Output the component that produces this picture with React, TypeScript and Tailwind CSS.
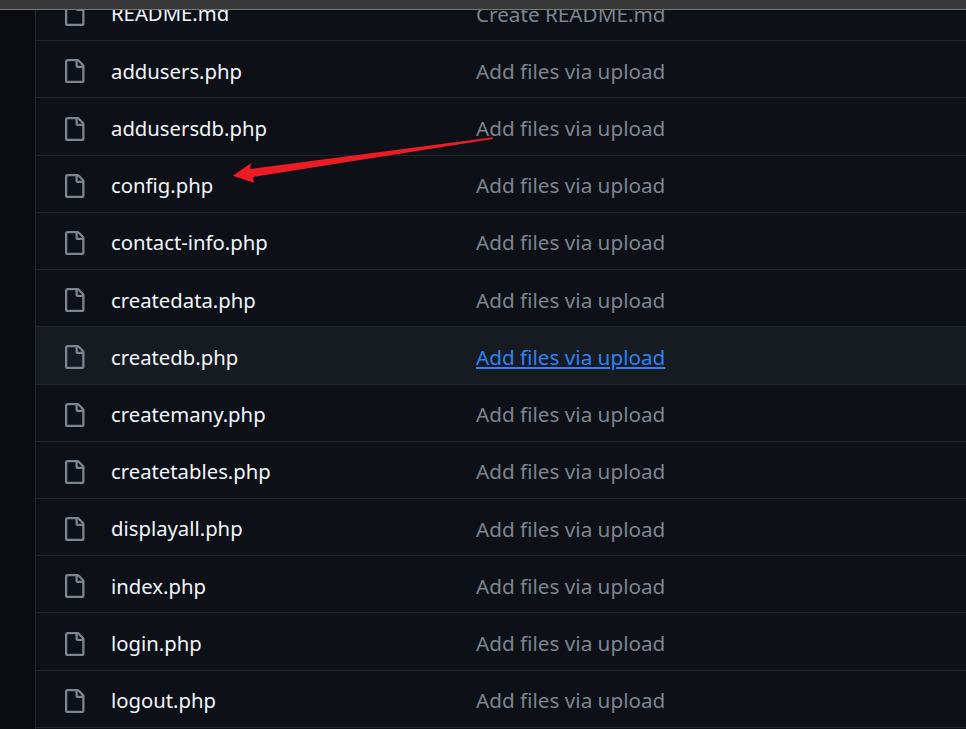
const files = [
  "README.md",
  "addusers.php",
  "addusersdb.php",
  "config.php",
  "contact-info.php",
  "createdata.php",
  "createdb.php",
  "createmany.php",
  "createtables.php",
  "displayall.php",
  "index.php",
  "login.php",
  "logout.php",
];

function FileIcon() {
  return (
    <svg width="24" height="24" viewBox="0 0 16 16" fill="#7d8590" className="shrink-0">
      <path d="M2 1.75C2 .784 2.784 0 3.75 0h6.586c.464 0 .909.184 1.237.513l2.914 2.914c.329.328.513.773.513 1.237v9.586A1.75 1.75 0 0 1 13.25 16h-9.5A1.75 1.75 0 0 1 2 14.25Zm1.75-.25a.25.25 0 0 0-.25.25v12.5c0 .138.112.25.25.25h9.5a.25.25 0 0 0 .25-.25V6h-2.75A1.75 1.75 0 0 1 9 4.25V1.5Zm6.75.062V4.25c0 .138.112.25.25.25h2.688l-.011-.013-2.914-2.914-.013-.011Z" />
    </svg>
  );
}

export default function App() {
  return (
    <div className="relative flex h-[729px] w-[966px] flex-col overflow-hidden bg-[#0d1117] font-['Noto_Sans',sans-serif]">
      <div className="z-10 h-[10px] shrink-0 border-b border-[#7a7a7a] bg-[#383838]" />
      <div className="flex min-h-0 flex-1">
        <div className="w-[35px] shrink-0 bg-[#0a0c10]" />
        <div className="min-w-0 flex-1 border-l border-[#21262d]">
          <div className="-mt-[26px]">
            {files.map((name) => {
              const hover = name === "createdb.php";
              return (
                <div
                  key={name}
                  className={`flex h-[57.23px] items-center border-b border-[#21262d] pl-[25.5px] pt-[4px] ${hover ? "bg-[#161b22]" : ""}`}
                >
                  <FileIcon />
                  <span className="mb-[1px] ml-[25.5px] w-[365px] shrink-0 text-[20.3px] leading-none text-[#f0f6fc]">{name}</span>
                  <span
                    className={`mb-[0.4px] text-[20.7px] leading-none ${hover ? "text-[#2f81f7] underline" : "text-[#7d8590]"}`}
                  >
                    {name === "README.md" ? "Create README.md" : "Add files via upload"}
                  </span>
                </div>
              );
            })}
          </div>
        </div>
      </div>
      <svg className="absolute left-0 top-0 pointer-events-none" width="966" height="729">
        <polygon points="493,137.3 493,139 253,177 254,182.7 232.7,175.7 251,163.3 250,169" fill="#ed1c24" />
      </svg>
    </div>
  );
}
